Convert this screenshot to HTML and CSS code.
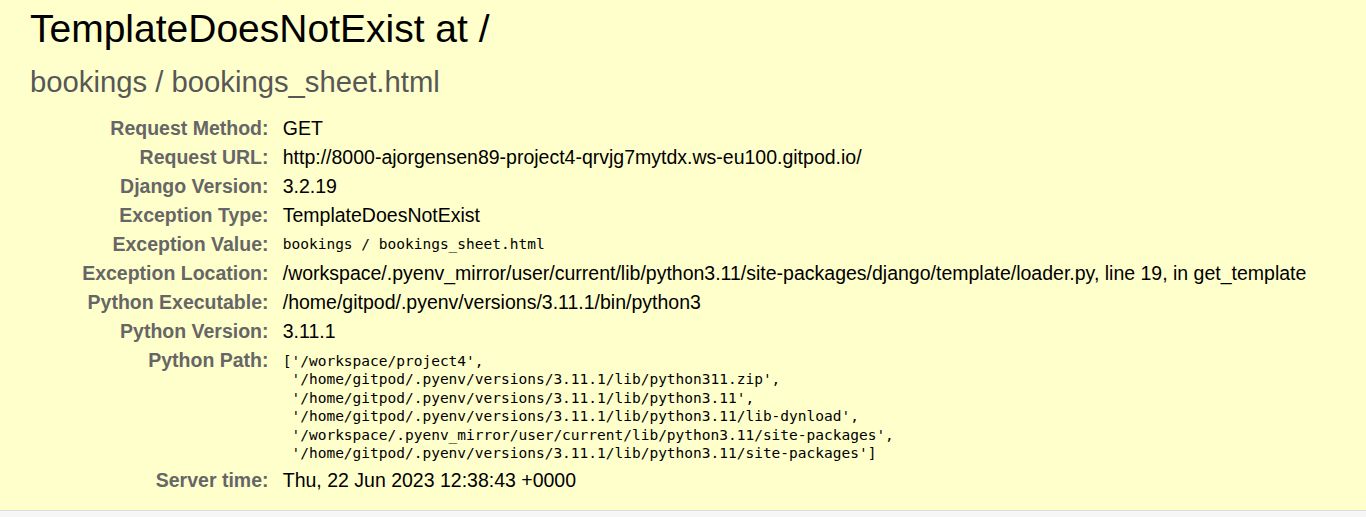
FILE: index.html
```html
<!DOCTYPE html>
<html lang="en">
<head>
<meta charset="utf-8">
<title>TemplateDoesNotExist at /</title>
<link rel="stylesheet" href="styles.css">
</head>
<body>
<div class="summary">
  <h1 class="title">TemplateDoesNotExist at /</h1>
  <pre class="exception-value">bookings / bookings_sheet.html</pre>
  <table class="meta">
    <tbody>
      <tr><th>Request Method:</th><td>GET</td></tr>
      <tr><th>Request URL:</th><td>http://8000-ajorgensen89-project4-qrvjg7mytdx.ws-eu100.gitpod.io/</td></tr>
      <tr><th>Django Version:</th><td>3.2.19</td></tr>
      <tr><th>Exception Type:</th><td>TemplateDoesNotExist</td></tr>
      <tr><th>Exception Value:</th><td><pre class="mono">bookings / bookings_sheet.html</pre></td></tr>
      <tr><th>Exception Location:</th><td>/workspace/.pyenv_mirror/user/current/lib/python3.11/site-packages/django/template/loader.py, line 19, in get_template</td></tr>
      <tr><th>Python Executable:</th><td>/home/gitpod/.pyenv/versions/3.11.1/bin/python3</td></tr>
      <tr><th>Python Version:</th><td>3.11.1</td></tr>
      <tr><th>Python Path:</th><td><pre class="mono path">['/workspace/project4',
 '/home/gitpod/.pyenv/versions/3.11.1/lib/python311.zip',
 '/home/gitpod/.pyenv/versions/3.11.1/lib/python3.11',
 '/home/gitpod/.pyenv/versions/3.11.1/lib/python3.11/lib-dynload',
 '/workspace/.pyenv_mirror/user/current/lib/python3.11/site-packages',
 '/home/gitpod/.pyenv/versions/3.11.1/lib/python3.11/site-packages']</pre></td></tr>
      <tr><th>Server time:</th><td>Thu, 22 Jun 2023 12:38:43 +0000</td></tr>
    </tbody>
  </table>
</div>
<div class="template-not-exist"></div>
</body>
</html>
```
FILE: styles.css
```css
html, body, div, h1, pre, table, th, td {
  margin: 0;
  padding: 0;
}
html, body {
  height: 100%;
}
body {
  font-family: "Liberation Sans", Arial, sans-serif;
  font-size: 19.5px;
  color: #000;
  background: #fff;
}
.summary {
  background: #ffc;
  padding: 6px 30px 14.5px 30px;
  border-bottom: 1px solid #ddd;
}
.title {
  font-weight: normal;
  font-size: 39px;
  line-height: 45px;
}
.exception-value {
  font-family: "Liberation Sans", Arial, sans-serif;
  font-size: 29.25px;
  line-height: 34px;
  color: #575757;
  margin: 14px 0 15px 0;
  white-space: pre-wrap;
}
.meta {
  border: none;
  border-collapse: collapse;
  background: transparent;
}
.meta th,
.meta td {
  vertical-align: top;
  padding: 3px 4.5px;
  line-height: 23px;
  text-align: left;
}
.meta th {
  width: 234px;
  text-align: right;
  color: #666;
  font-weight: bold;
  padding-right: 9.75px;
}
.mono {
  font-family: "DejaVu Sans Mono", "Liberation Mono", monospace;
  font-size: 14.5px;
  line-height: 23px;
  white-space: pre-wrap;
}
.path {
  line-height: 18.6px;
  padding-top: 2.5px;
}
.template-not-exist {
  background: #f6f6f6;
  min-height: 40px;
}
```
